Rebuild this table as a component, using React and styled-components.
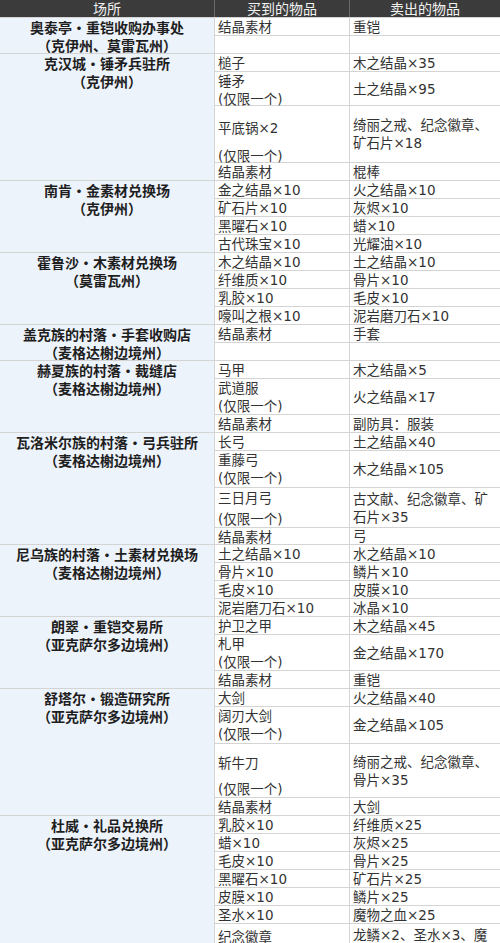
import React from "react";
import styled, { createGlobalStyle } from "styled-components";

const groups = [
  {
    place: ["奥泰亭・重铠收购办事处", "（克伊州、莫雷瓦州）"],
    rows: [
      { h: 18, buy: ["结晶素材"], sell: ["重铠"] },
      { h: 18, buy: [], sell: [] },
    ],
  },
  {
    place: ["克汉城・锤矛兵驻所", "（克伊州）"],
    rows: [
      { h: 18, buy: ["槌子"], sell: ["木之结晶×35"] },
      { h: 34, buy: ["锤矛", "(仅限一个)"], sell: ["土之结晶×95"] },
      { h: 57, buy: ["平底锅×2", "(仅限一个)"], lh: 28, pt: 8, sell: ["绮丽之戒、纪念徽章、", "矿石片×18"] },
      { h: 18, buy: ["结晶素材"], sell: ["棍棒"] },
    ],
  },
  {
    place: ["南肯・金素材兑换场", "（克伊州）"],
    rows: [
      { h: 18, buy: ["金之结晶×10"], sell: ["火之结晶×10"] },
      { h: 18, buy: ["矿石片×10"], sell: ["灰烬×10"] },
      { h: 18, buy: ["黑曜石×10"], sell: ["蜡×10"] },
      { h: 18, buy: ["古代珠宝×10"], sell: ["光耀油×10"] },
    ],
  },
  {
    place: ["霍鲁沙・木素材兑换场", "（莫雷瓦州）"],
    rows: [
      { h: 18, buy: ["木之结晶×10"], sell: ["土之结晶×10"] },
      { h: 18, buy: ["纤维质×10"], sell: ["骨片×10"] },
      { h: 18, buy: ["乳胶×10"], sell: ["毛皮×10"] },
      { h: 18, buy: ["嚎叫之根×10"], sell: ["泥岩磨刀石×10"] },
    ],
  },
  {
    place: ["盖克族的村落・手套收购店", "（麦格达榭边境州）"],
    rows: [
      { h: 18, buy: ["结晶素材"], sell: ["手套"] },
      { h: 18, buy: [], sell: [] },
    ],
  },
  {
    place: ["赫夏族的村落・裁缝店", "（麦格达榭边境州）"],
    rows: [
      { h: 18, buy: ["马甲"], sell: ["木之结晶×5"] },
      { h: 36, buy: ["武道服", "(仅限一个)"], sell: ["火之结晶×17"] },
      { h: 18, buy: ["结晶素材"], sell: ["副防具：服装"] },
    ],
  },
  {
    place: ["瓦洛米尔族的村落・弓兵驻所", "（麦格达榭边境州）"],
    rows: [
      { h: 18, buy: ["长弓"], sell: ["土之结晶×40"] },
      { h: 37, buy: ["重藤弓", "(仅限一个)"], sell: ["木之结晶×105"] },
      { h: 40, buy: ["三日月弓", "(仅限一个)"], lh: 21, sell: ["古文献、纪念徽章、矿", "石片×35"] },
      { h: 17, buy: ["结晶素材"], sell: ["弓"] },
    ],
  },
  {
    place: ["尼乌族的村落・土素材兑换场", "（麦格达榭边境州）"],
    rows: [
      { h: 18, buy: ["土之结晶×10"], sell: ["水之结晶×10"] },
      { h: 18, buy: ["骨片×10"], sell: ["鳞片×10"] },
      { h: 18, buy: ["毛皮×10"], sell: ["皮膜×10"] },
      { h: 18, buy: ["泥岩磨刀石×10"], sell: ["冰晶×10"] },
    ],
  },
  {
    place: ["朗翠・重铠交易所", "（亚克萨尔多边境州）"],
    rows: [
      { h: 18, buy: ["护卫之甲"], sell: ["木之结晶×45"] },
      { h: 36, buy: ["札甲", "(仅限一个)"], sell: ["金之结晶×170"] },
      { h: 18, buy: ["结晶素材"], sell: ["重铠"] },
    ],
  },
  {
    place: ["舒塔尔・锻造研究所", "（亚克萨尔多边境州）"],
    rows: [
      { h: 18, buy: ["大剑"], sell: ["火之结晶×40"] },
      { h: 37, buy: ["阔刃大剑", "(仅限一个)"], sell: ["金之结晶×105"] },
      { h: 54, buy: ["斩牛刀", "(仅限一个)"], lh: 26, pt: 6, sell: ["绮丽之戒、纪念徽章、", "骨片×35"] },
      { h: 18, buy: ["结晶素材"], sell: ["大剑"] },
    ],
  },
  {
    place: ["杜威・礼品兑换所", "（亚克萨尔多边境州）"],
    rows: [
      { h: 18, buy: ["乳胶×10"], sell: ["纤维质×25"] },
      { h: 18, buy: ["蜡×10"], sell: ["灰烬×25"] },
      { h: 18, buy: ["毛皮×10"], sell: ["骨片×25"] },
      { h: 18, buy: ["黑曜石×10"], sell: ["矿石片×25"] },
      { h: 18, buy: ["皮膜×10"], sell: ["鳞片×25"] },
      { h: 18, buy: ["圣水×10"], sell: ["魔物之血×25"] },
      { h: 40, buy: ["纪念徽章"], pt: 4, sell: ["龙鳞×2、圣水×3、魔", "物之血×5"] },
    ],
  },
];

function App() {
  return (
    <>
      <GlobalStyle />
      <Sheet>
        <HeadRow>
          <HeadCell>场所</HeadCell>
          <HeadCell>买到的物品</HeadCell>
          <HeadCell>卖出的物品</HeadCell>
        </HeadRow>
        {groups.map((g, gi) => (
          <Group key={gi} $rows={g.rows.map((r) => `${r.h - 1}px`).join(" ")}>
            <Place $span={g.rows.length}>
              {g.place.map((line, i) => (
                <div key={i}>{line}</div>
              ))}
            </Place>
            {g.rows.map((r, ri) => (
              <React.Fragment key={ri}>
                <BuyCell $row={ri + 1} $lh={r.lh || 18} $pt={r.pt || 0}>
                  {r.buy.map((line, i) => (
                    <div key={i}>{line}</div>
                  ))}
                </BuyCell>
                <SellCell $row={ri + 1}>
                  {r.sell.map((line, i) => (
                    <div key={i}>{line}</div>
                  ))}
                </SellCell>
              </React.Fragment>
            ))}
          </Group>
        ))}
      </Sheet>
    </>
  );
}

const GlobalStyle = createGlobalStyle`
  html, body {
    margin: 0;
    padding: 0;
    overflow: hidden;
    background: #fff;
  }
  #root {
    width: 500px;
  }
`;

const Sheet = styled.div`
  display: flex;
  flex-direction: column;
  gap: 1px;
  background: #d4d4d4;
  font-family: "DejaVu Sans", "Noto Sans CJK SC", sans-serif;
  color: #333;
`;

const HeadRow = styled.div`
  display: grid;
  grid-template-columns: 214px 134px 1fr;
  column-gap: 1px;
  height: 17px;
  background: #6a6a6a;
`;

const HeadCell = styled.div`
  background: #3b3b3b;
  color: #f2f2f2;
  font-family: "Noto Sans CJK SC", sans-serif;
  font-size: 14px;
  line-height: 17px;
  text-align: center;
`;

const Group = styled.div`
  display: grid;
  grid-template-columns: 214px 134px 1fr;
  grid-template-rows: ${(p) => p.$rows};
  gap: 1px;
`;

const Place = styled.div`
  grid-column: 1;
  grid-row: 1 / span ${(p) => p.$span};
  background: #edf3fb;
  color: #1e1e1e;
  font-family: "Noto Sans CJK SC", sans-serif;
  font-weight: 700;
  font-size: 14px;
  line-height: 18px;
  text-align: center;
  white-space: nowrap;
`;

const BuyCell = styled.div`
  grid-column: 2;
  grid-row: ${(p) => p.$row};
  background: #fff;
  padding: ${(p) => p.$pt}px 0 0 3px;
  font-size: 13.5px;
  line-height: ${(p) => p.$lh}px;
  white-space: nowrap;
`;

const SellCell = styled.div`
  grid-column: 3;
  grid-row: ${(p) => p.$row};
  background: #fff;
  display: flex;
  flex-direction: column;
  justify-content: center;
  padding-left: 3px;
  font-size: 13.5px;
  line-height: 18px;
  white-space: nowrap;
`;

export default App;
